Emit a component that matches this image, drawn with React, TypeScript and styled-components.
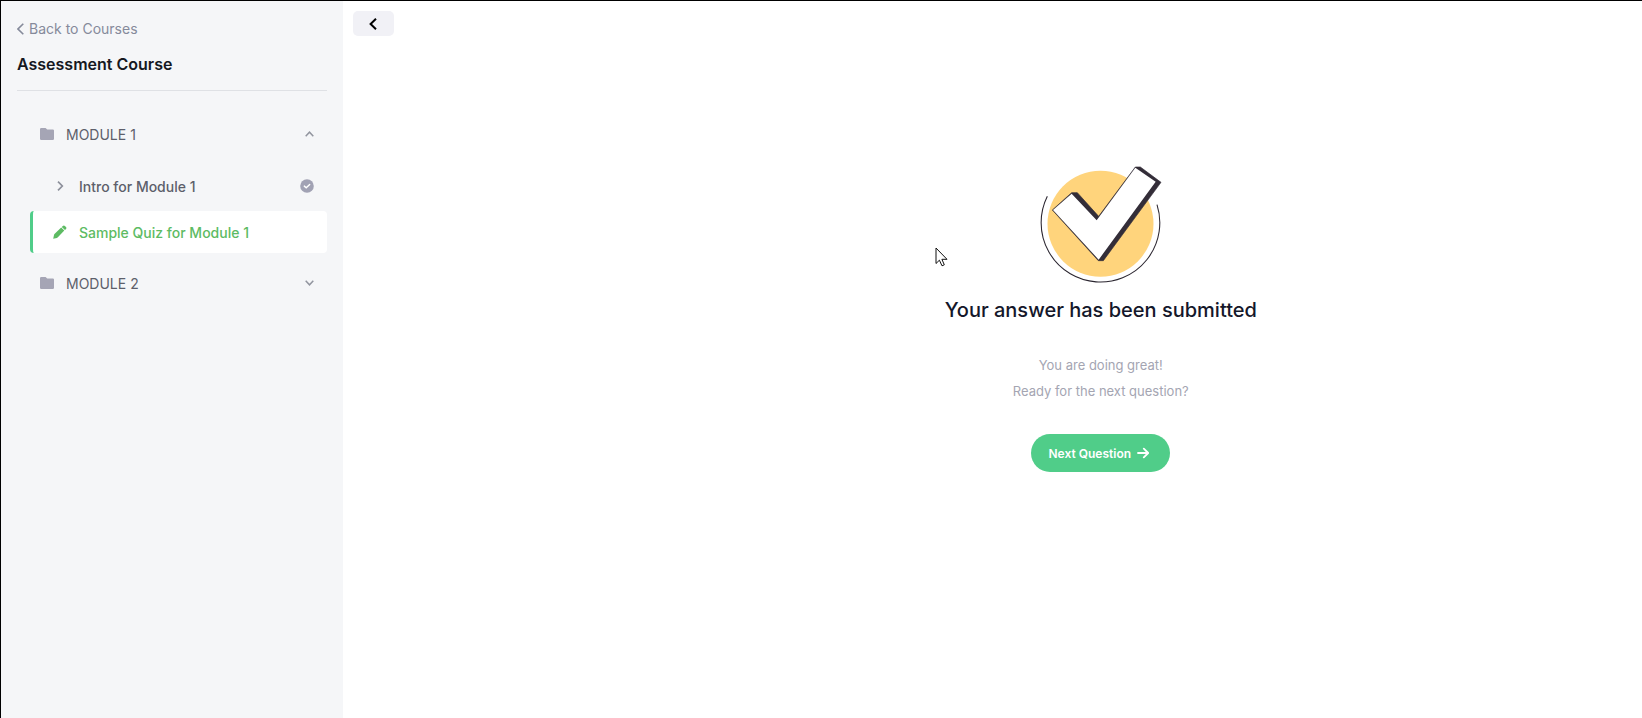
import React, { useState } from "react";
import styled, { createGlobalStyle, css } from "styled-components";

const GlobalStyle = createGlobalStyle`
  *, *::before, *::after { box-sizing: border-box; }
  body { margin: 0; background: #fff; font-family: Inter, "Liberation Sans", sans-serif; }
  button { font: inherit; border: 0; cursor: pointer; }
  h1, h2, p, ul { margin: 0; padding: 0; }
  ul { list-style: none; }
`;

const Page = styled.div`
  display: flex;
  min-height: 100vh;
  border-top: 1px solid #000;
  border-left: 1px solid #000;
`;

const Sidebar = styled.aside`
  flex: none;
  width: 342px;
  padding: 16px;
  background: #f5f6f8;
`;

const BackLink = styled.a`
  display: flex;
  align-items: center;
  gap: 5px;
  font-size: 14px;
  line-height: 23px;
  color: #858a9b;
  text-decoration: none;
`;

const CourseTitle = styled.h1`
  padding: 12px 0 14px;
  border-bottom: 1px solid #dfe1e5;
  font-size: 16px;
  line-height: 24px;
  font-weight: 600;
  color: #16181f;
`;

const Modules = styled.nav`
  padding: 22px 0 0 13px;
`;

const ModuleButton = styled.button`
  display: flex;
  align-items: center;
  gap: 12px;
  width: 100%;
  height: 42px;
  padding: 0 13px 0 10px;
  background: none;
  font-size: 14px;
  color: #5d5f6b;
  text-align: left;
`;

const Label = styled.span`
  flex: 1;
`;

const Lessons = styled.ul`
  display: flex;
  flex-direction: column;
  gap: 4px;
  padding: 10px 0 9px;
`;

const Lesson = styled.a<{ $active?: boolean }>`
  display: flex;
  align-items: center;
  gap: 12px;
  height: 42px;
  padding: 0 13px 0 20px;
  border-left: 3px solid transparent;
  border-radius: 4px;
  font-size: 14px;
  font-weight: 500;
  color: #5d5f6b;
  text-decoration: none;
  ${(p) =>
    p.$active &&
    css`
      background: #fff;
      border-left-color: #50cd89;
      color: #5dbb63;
    `}
`;

const Main = styled.main`
  position: relative;
  flex: 1;
  display: grid;
  grid-template-columns: 1fr 5fr;
  align-items: start;
`;

const CollapseButton = styled.button`
  display: flex;
  align-items: center;
  justify-content: center;
  width: 41px;
  height: 25px;
  margin: 10px 0 0 10px;
  padding: 0 2px 0 0;
  border-radius: 5px;
  background: #f1f1f6;
`;

const Result = styled.section`
  display: flex;
  flex-direction: column;
  align-items: center;
  padding-top: 164px;
  text-align: center;
`;

const ResultTitle = styled.h2`
  padding: 10px 0 27px;
  font-size: 20px;
  line-height: 30px;
  font-weight: 500;
  color: #14172a;
`;

const ResultText = styled.p`
  font-size: 13px;
  line-height: 26px;
  color: #a4a5b2;
`;

const NextButton = styled.button`
  display: flex;
  align-items: center;
  gap: 6px;
  height: 38px;
  margin-top: 30px;
  padding: 0 21px 0 17px;
  border-radius: 19px;
  background: #50cd89;
  font-size: 12px;
  font-weight: 600;
  color: #fff;
`;

const Pointer = styled.svg`
  position: absolute;
  left: 592px;
  top: 246px;
`;

const Chevron = ({ d, w, h, color, stroke = 1.5 }: { d: string; w: number; h: number; color: string; stroke?: number }) => (
  <svg width={w} height={h} viewBox={`0 0 ${w} ${h}`} fill="none" stroke={color} strokeWidth={stroke} aria-hidden="true">
    <path d={d} />
  </svg>
);

const FolderIcon = () => (
  <svg width="14" height="12" viewBox="0 0 14 12" fill="#a5a5b5" aria-hidden="true">
    <path d="M1.2 0H5.6L7.2 1.4H12.8Q14 1.4 14 2.6V10.8Q14 12 12.8 12H1.2Q0 12 0 10.8V1.2Q0 0 1.2 0Z" />
  </svg>
);

const PencilIcon = () => (
  <svg width="14" height="14" viewBox="0 0 14 14" fill="#5dbb63" aria-hidden="true">
    <path d="M.2 13.8L1 9.9Q1.2 9.2 1.7 8.7L8.2 2.5L11.3 5.6L5.1 12.1Q4.6 12.7 3.9 12.9Z" />
    <path d="M8.8 1.9L9.8 1Q10.8 0 11.9.9L13 2Q14 3.1 13 4.1L12 5Z" />
  </svg>
);

const DoneIcon = () => (
  <svg width="14" height="14" viewBox="0 0 14 14" fill="none" role="img" aria-label="Completed">
    <circle cx="7" cy="7" r="6.8" fill="#a1a2b4" />
    <path d="M4.3 7.1L6.2 8.7L9.7 5.4" stroke="#fff" strokeWidth="1.4" strokeLinecap="round" />
  </svg>
);

const ArrowIcon = () => (
  <svg width="12" height="12" viewBox="0 0 12 12" fill="none" stroke="#fff" strokeWidth="1.8" strokeLinecap="round" strokeLinejoin="round" aria-hidden="true">
    <path d="M1 6H11M6.8 1.6L11.2 6L6.8 10.4" />
  </svg>
);

const CheckIllustration = () => (
  <svg width="127" height="120" viewBox="51 45 381 360" aria-hidden="true">
    <circle cx="241.5" cy="221" r="159" fill="#ffd47c" />
    <path d="M82 139A178 178 0 1 0 411 164" fill="none" stroke="#2b2630" strokeWidth="3.2" />
    <path d="M97 180L155 128H172L236 199L346 51H361L423 97L250 332H235Z" fill="#332d38" stroke="#332d38" strokeWidth="2" />
    <path d="M99 180L155 131L230 211L346 53L407 95L236 329Z" fill="#fff" />
  </svg>
);

export default function App() {
  const [open, setOpen] = useState(true);
  return (
    <>
      <GlobalStyle />
      <Page>
        <Sidebar>
          <BackLink href="#courses">
            <Chevron w={7} h={12} d="M6.3 .8L1 6L6.3 11.2" color="#858a9b" stroke={1.6} />
            Back to Courses
          </BackLink>
          <CourseTitle>Assessment Course</CourseTitle>
          <Modules aria-label="Modules">
            <ModuleButton aria-expanded={open} onClick={() => setOpen(!open)}>
              <FolderIcon />
              <Label>MODULE 1</Label>
              <Chevron w={9} h={6} d={open ? "M.7 5.2L4.5 1.2L8.3 5.2" : "M.7 .8L4.5 4.8L8.3 .8"} color="#92959f" />
            </ModuleButton>
            {open && (
              <Lessons>
                <li>
                  <Lesson href="#intro">
                    <Chevron w={14} h={10} d="M5 .7L9.3 5L5 9.3" color="#8d909b" stroke={1.7} />
                    <Label>Intro for Module 1</Label>
                    <DoneIcon />
                  </Lesson>
                </li>
                <li>
                  <Lesson href="#quiz" aria-current="page" $active>
                    <PencilIcon />
                    <Label>Sample Quiz for Module 1</Label>
                  </Lesson>
                </li>
              </Lessons>
            )}
            <ModuleButton aria-expanded={false}>
              <FolderIcon />
              <Label>MODULE 2</Label>
              <Chevron w={9} h={6} d="M.7 .8L4.5 4.8L8.3 .8" color="#92959f" />
            </ModuleButton>
          </Modules>
        </Sidebar>
        <Main>
          <CollapseButton aria-label="Collapse sidebar">
            <Chevron w={8} h={12} d="M7 .8L1.6 6L7 11.2" color="#000" stroke={2} />
          </CollapseButton>
          <Result>
            <CheckIllustration />
            <ResultTitle>Your answer has been submitted</ResultTitle>
            <ResultText>You are doing great!</ResultText>
            <ResultText>Ready for the next question?</ResultText>
            <NextButton>
              Next Question
              <ArrowIcon />
            </NextButton>
          </Result>
          <Pointer width="13" height="20" viewBox="0 0 13 20" fill="#fff" stroke="#111" aria-hidden="true">
            <path d="M1 1V16.5L4.4 13.2L7 18.8L9.3 17.8L6.9 12.3H12Z" />
          </Pointer>
        </Main>
      </Page>
    </>
  );
}
